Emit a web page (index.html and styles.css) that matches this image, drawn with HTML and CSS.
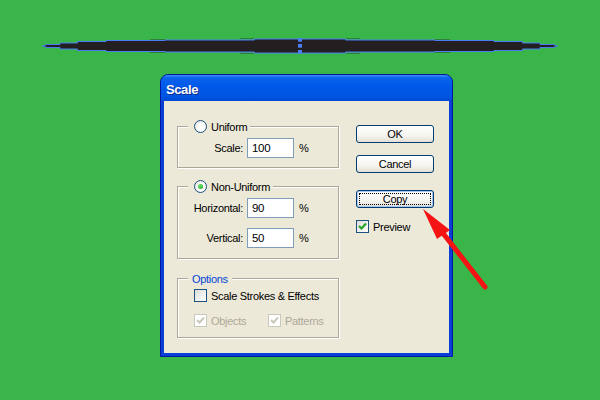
FILE: index.html
```html
<!DOCTYPE html>
<html lang="en">
  <head>
    <meta charset="UTF-8" />
    <meta name="viewport" content="width=device-width, initial-scale=1.0" />
    <title>Scale</title>
    <link rel="stylesheet" href="styles.css">
  </head>
  <body>
    <div class="stage">
      <!-- selected shape on the artboard -->
      <svg class="shape" width="600" height="20" viewBox="0 0 600 20">
        <g stroke="#2f7f3b" stroke-width="1">
          <line x1="150" y1="3.5" x2="165" y2="3.5" />
          <line x1="150" y1="16.5" x2="165" y2="16.5" />
          <line x1="240" y1="2.5" x2="254" y2="2.5" />
          <line x1="240" y1="17.5" x2="254" y2="17.5" />
          <line x1="346" y1="2.5" x2="360" y2="2.5" />
          <line x1="346" y1="17.5" x2="360" y2="17.5" />
          <line x1="435" y1="3.5" x2="450" y2="3.5" />
          <line x1="435" y1="16.5" x2="450" y2="16.5" />
        </g>
        <polygon fill="#231f20" stroke="#4a7cf5" stroke-width="1"
          points="42.5,10 47,8.5 60,8.5 60,7 77.5,7 77.5,5.5 106,5.5 106,4.5 165,4.5 165,4 254.5,4 254.5,3 345.5,3 345.5,4 435,4 435,4.5 494,4.5 494,5.5 522.5,5.5 522.5,7 540,7 540,8.5 553,8.5 557.5,10 553,11.5 540,11.5 540,13 522.5,13 522.5,14.5 494,14.5 494,15.5 435,15.5 435,16 345.5,16 345.5,17 254.5,17 254.5,16 165,16 165,15.5 106,15.5 106,14.5 77.5,14.5 77.5,13 60,13 60,11.5 47,11.5" />
        <g fill="#4a7cf5">
          <rect x="298" y="2.3" width="4" height="3.4" />
          <rect x="298" y="8" width="4" height="3.7" />
          <rect x="298" y="14" width="4" height="3.7" />
        </g>
      </svg>

      <div class="dialog">
        <div class="titlebar">Scale</div>
        <div class="dialog-body">
          <div class="col-left">
            <div class="group group-uniform">
              <div class="legend legend-radio">
                <span class="radio"></span>
                <span>Uniform</span>
              </div>
              <div class="field-row">
                <label class="field-label">Scale:</label>
                <div class="field-input">100</div>
                <span class="unit">%</span>
              </div>
            </div>

            <div class="group group-nonuniform">
              <div class="legend legend-radio">
                <span class="radio checked"></span>
                <span>Non-Uniform</span>
              </div>
              <div class="field-row">
                <label class="field-label">Horizontal:</label>
                <div class="field-input">90</div>
                <span class="unit">%</span>
              </div>
              <div class="field-row">
                <label class="field-label">Vertical:</label>
                <div class="field-input">50</div>
                <span class="unit">%</span>
              </div>
            </div>

            <div class="group group-options">
              <div class="legend legend-text">Options</div>
              <div class="check-row">
                <span class="check"></span>
                <span>Scale Strokes &amp; Effects</span>
              </div>
              <div class="check-row disabled">
                <div class="check-item">
                  <span class="check">
                    <svg width="11" height="11" viewBox="0 0 11 11"><path d="M2 5 L4.5 7.5 L9 2.5" fill="none" stroke="currentColor" stroke-width="2" /></svg>
                  </span>
                  <span>Objects</span>
                </div>
                <div class="check-item">
                  <span class="check">
                    <svg width="11" height="11" viewBox="0 0 11 11"><path d="M2 5 L4.5 7.5 L9 2.5" fill="none" stroke="currentColor" stroke-width="2" /></svg>
                  </span>
                  <span>Patterns</span>
                </div>
              </div>
            </div>
          </div>

          <div class="col-right">
            <button class="btn">OK</button>
            <button class="btn btn-cancel">Cancel</button>
            <button class="btn btn-copy">Copy</button>
            <div class="check-row preview">
              <span class="check checked">
                <svg width="11" height="11" viewBox="0 0 11 11"><path d="M2 5 L4.5 7.5 L9 2.5" fill="none" stroke="currentColor" stroke-width="2" /></svg>
              </span>
              <span>Preview</span>
            </div>
          </div>
        </div>
      </div>

      <!-- annotation arrow drawn over the screenshot -->
      <svg class="arrow" width="600" height="400" viewBox="0 0 600 400">
        <line x1="442" y1="232" x2="485" y2="287" stroke="#f51414" stroke-width="5" stroke-linecap="round" />
        <polygon points="423,209 437,239 450,230" fill="#f51414" />
      </svg>
    </div>
  </body>
</html>
```

FILE: styles.css
```css
body {
  margin: 0;
  padding: 0;
  background-color: #39b54a;
  font-family: "Liberation Sans", Arial, sans-serif;
  font-size: 11px;
  letter-spacing: -0.3px;
  color: #000;
}

.stage {
  position: relative;
  width: 600px;
  height: 400px;
  overflow: hidden;
}

.shape {
  display: block;
  margin-top: 36px;
}

.arrow {
  position: absolute;
  left: 0;
  top: 0;
}

/* window frame */
.dialog {
  width: 291px;
  height: 281px;
  margin: 18px 0 0 160px;
  border: 1px solid #0019a0;
  border-radius: 8px 8px 0 0;
  background-color: #0a3ed8;
  display: flex;
  flex-direction: column;
}

.titlebar {
  height: 26px;
  box-sizing: border-box;
  padding: 7px 0 0 5px;
  border-radius: 7px 7px 0 0;
  background: linear-gradient(#3d8cf8 0, #0a62ec 3px, #0058e8 45%, #0054e2 85%, #0048d0 100%);
  color: #fff;
  font-size: 13px;
  font-weight: bold;
  letter-spacing: -0.4px;
  text-shadow: 1px 1px 0 #0b2a8c;
}

.dialog-body {
  flex: 1;
  margin: 0 3px 3px;
  background-color: #ece9d8;
  display: flex;
  padding: 24px 0 0 13px;
  gap: 17px;
}

.col-left {
  width: 162px;
  margin-top: 1px;
  display: flex;
  flex-direction: column;
  gap: 18px;
}

/* group boxes */
.group {
  position: relative;
  border: 1px solid #aca899;
  box-shadow: inset 1px 1px 0 #fff, 1px 1px 0 #fff;
  display: flex;
  flex-direction: column;
}

.group-uniform {
  padding: 11px 0 9px;
}

.group-nonuniform {
  padding: 11px 0 10px;
  gap: 10px;
}

.group-options {
  margin-top: 1px;
  padding: 10px 0 10px 16px;
  gap: 12px;
}

.legend {
  position: absolute;
  top: -7px;
  left: 10px;
  height: 13px;
  background-color: #ece9d8;
  display: flex;
  align-items: center;
  gap: 4px;
}

.legend-radio {
  padding: 0 3px 0 6px;
}

.legend-text {
  padding: 0 4px;
  color: #0046d5;
}

.radio {
  width: 11px;
  height: 11px;
  border: 1px solid #1c5180;
  border-radius: 50%;
  background: radial-gradient(circle at 60% 60%, #fff 30%, #dcdcd5 100%);
  display: flex;
  align-items: center;
  justify-content: center;
}

.radio.checked::before {
  content: "";
  width: 5px;
  height: 5px;
  border-radius: 50%;
  background: radial-gradient(circle at 35% 35%, #6ee36a, #21a121);
}

.field-row {
  display: flex;
  align-items: center;
  height: 20px;
}

.field-label {
  width: 65px;
  text-align: right;
}

.field-input {
  width: 47px;
  height: 20px;
  box-sizing: border-box;
  margin-left: 4px;
  padding-left: 4px;
  border: 1px solid #7f9db9;
  background-color: #fff;
  display: flex;
  align-items: center;
  font-size: 11.5px;
}

.unit {
  margin-left: 5px;
}

/* checkboxes */
.check-row {
  display: flex;
  align-items: center;
  height: 13px;
  gap: 4px;
}

.check-item {
  display: flex;
  align-items: center;
  gap: 4px;
  width: 72px;
}

.check {
  width: 11px;
  height: 11px;
  border: 1px solid #1c5180;
  background: linear-gradient(135deg, #dcdcd7, #fff);
  color: #21a121;
  display: flex;
  align-items: center;
  justify-content: center;
}

.disabled {
  color: #aca899;
}

.disabled .check {
  border-color: #cac8bb;
  background: #fff;
  color: #cac8bb;
}

/* buttons */
.col-right {
  width: 78px;
  display: flex;
  flex-direction: column;
}

.btn {
  height: 18px;
  padding: 0;
  border: 1px solid #003c74;
  border-radius: 3px;
  background: linear-gradient(#fff 0, #f5f4ef 60%, #e3e0d6 100%);
  font-family: "Liberation Sans", Arial, sans-serif;
  font-size: 11px;
  letter-spacing: -0.3px;
  color: #000;
}

.btn-cancel {
  margin-top: 12px;
}

.btn-copy {
  margin-top: 17px;
  box-shadow: inset 0 0 0 1px #a9c6f2;
  outline: 1px dotted #000;
  outline-offset: -4px;
}

.preview {
  margin-top: 12px;
}
```
